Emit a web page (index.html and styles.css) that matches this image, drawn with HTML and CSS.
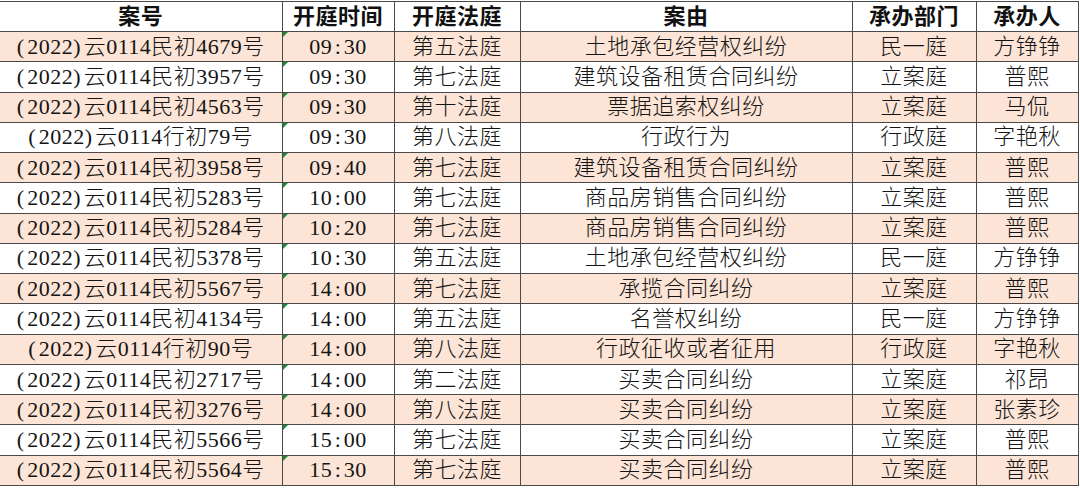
FILE: index.html
```html
<!DOCTYPE html>
<html lang="zh-CN">
<head>
<meta charset="utf-8">
<title>开庭排期</title>
<link rel="stylesheet" href="styles.css">
</head>
<body>
<table class="sheet">
  <colgroup>
    <col class="c-no"><col class="c-time"><col class="c-court"><col class="c-cause"><col class="c-dept"><col class="c-judge">
  </colgroup>
  <thead>
    <tr><th>案号</th><th>开庭时间</th><th>开庭法庭</th><th>案由</th><th>承办部门</th><th>承办人</th></tr>
  </thead>
  <tbody>
    <tr class="alt"><td><span class="pl">(</span>2022<span class="pl">)</span>云0114民初4679号</td><td class="time">09<span class="co">:</span>30</td><td>第五法庭</td><td>土地承包经营权纠纷</td><td>民一庭</td><td>方铮铮</td></tr>
    <tr><td><span class="pl">(</span>2022<span class="pl">)</span>云0114民初3957号</td><td class="time">09<span class="co">:</span>30</td><td>第七法庭</td><td>建筑设备租赁合同纠纷</td><td>立案庭</td><td>普熙</td></tr>
    <tr class="alt"><td><span class="pl">(</span>2022<span class="pl">)</span>云0114民初4563号</td><td class="time">09<span class="co">:</span>30</td><td>第十法庭</td><td>票据追索权纠纷</td><td>立案庭</td><td>马侃</td></tr>
    <tr><td><span class="pl">(</span>2022<span class="pl">)</span>云0114行初79号</td><td class="time">09<span class="co">:</span>30</td><td>第八法庭</td><td>行政行为</td><td>行政庭</td><td>字艳秋</td></tr>
    <tr class="alt"><td><span class="pl">(</span>2022<span class="pl">)</span>云0114民初3958号</td><td class="time">09<span class="co">:</span>40</td><td>第七法庭</td><td>建筑设备租赁合同纠纷</td><td>立案庭</td><td>普熙</td></tr>
    <tr><td><span class="pl">(</span>2022<span class="pl">)</span>云0114民初5283号</td><td class="time">10<span class="co">:</span>00</td><td>第七法庭</td><td>商品房销售合同纠纷</td><td>立案庭</td><td>普熙</td></tr>
    <tr class="alt"><td><span class="pl">(</span>2022<span class="pl">)</span>云0114民初5284号</td><td class="time">10<span class="co">:</span>20</td><td>第七法庭</td><td>商品房销售合同纠纷</td><td>立案庭</td><td>普熙</td></tr>
    <tr><td><span class="pl">(</span>2022<span class="pl">)</span>云0114民初5378号</td><td class="time">10<span class="co">:</span>30</td><td>第五法庭</td><td>土地承包经营权纠纷</td><td>民一庭</td><td>方铮铮</td></tr>
    <tr class="alt"><td><span class="pl">(</span>2022<span class="pl">)</span>云0114民初5567号</td><td class="time">14<span class="co">:</span>00</td><td>第七法庭</td><td>承揽合同纠纷</td><td>立案庭</td><td>普熙</td></tr>
    <tr><td><span class="pl">(</span>2022<span class="pl">)</span>云0114民初4134号</td><td class="time">14<span class="co">:</span>00</td><td>第五法庭</td><td>名誉权纠纷</td><td>民一庭</td><td>方铮铮</td></tr>
    <tr class="alt"><td><span class="pl">(</span>2022<span class="pl">)</span>云0114行初90号</td><td class="time">14<span class="co">:</span>00</td><td>第八法庭</td><td>行政征收或者征用</td><td>行政庭</td><td>字艳秋</td></tr>
    <tr><td><span class="pl">(</span>2022<span class="pl">)</span>云0114民初2717号</td><td class="time">14<span class="co">:</span>00</td><td>第二法庭</td><td>买卖合同纠纷</td><td>立案庭</td><td>祁昂</td></tr>
    <tr class="alt"><td><span class="pl">(</span>2022<span class="pl">)</span>云0114民初3276号</td><td class="time">14<span class="co">:</span>00</td><td>第八法庭</td><td>买卖合同纠纷</td><td>立案庭</td><td>张素珍</td></tr>
    <tr><td><span class="pl">(</span>2022<span class="pl">)</span>云0114民初5566号</td><td class="time">15<span class="co">:</span>00</td><td>第七法庭</td><td>买卖合同纠纷</td><td>立案庭</td><td>普熙</td></tr>
    <tr class="alt"><td><span class="pl">(</span>2022<span class="pl">)</span>云0114民初5564号</td><td class="time">15<span class="co">:</span>30</td><td>第七法庭</td><td>买卖合同纠纷</td><td>立案庭</td><td>普熙</td></tr>
  </tbody>
</table>
</body>
</html>
```
FILE: styles.css
```css
html, body {
  margin: 0;
  padding: 0;
  background: #ffffff;
}

.sheet {
  border-collapse: collapse;
  table-layout: fixed;
  width: 1078px;
  margin-top: 1px;
  font-family: "Liberation Serif", "Noto Sans CJK SC", serif;
  font-size: 22px;
  letter-spacing: 0.5px;
  color: #141414;
}

.c-no { width: 282px; }
.c-time { width: 112px; }
.c-court { width: 126px; }
.c-cause { width: 332px; }
.c-dept { width: 124px; }
.c-judge { width: 102px; }

.sheet th,
.sheet td {
  border: 1px solid #4a4a4a;
  padding: 0;
  text-align: center;
  vertical-align: middle;
  white-space: nowrap;
  overflow: hidden;
  line-height: 1;
}

.sheet tr > :first-child {
  border-left: none;
}

.sheet thead th {
  height: 29px;
  font-weight: bold;
  color: #111111;
}

.sheet tbody td {
  height: 29.27px;
  font-weight: 300;
}

.sheet tbody tr.alt td {
  background: #fce4d6;
}

.time {
  position: relative;
}

.time::before {
  content: "";
  position: absolute;
  left: 0;
  top: 0;
  width: 0;
  height: 0;
  border-top: 5px solid #1c8a35;
  border-right: 5px solid transparent;
}

.pl {
  letter-spacing: 3.2px;
}

.co {
  padding: 0 2.5px;
}
```
